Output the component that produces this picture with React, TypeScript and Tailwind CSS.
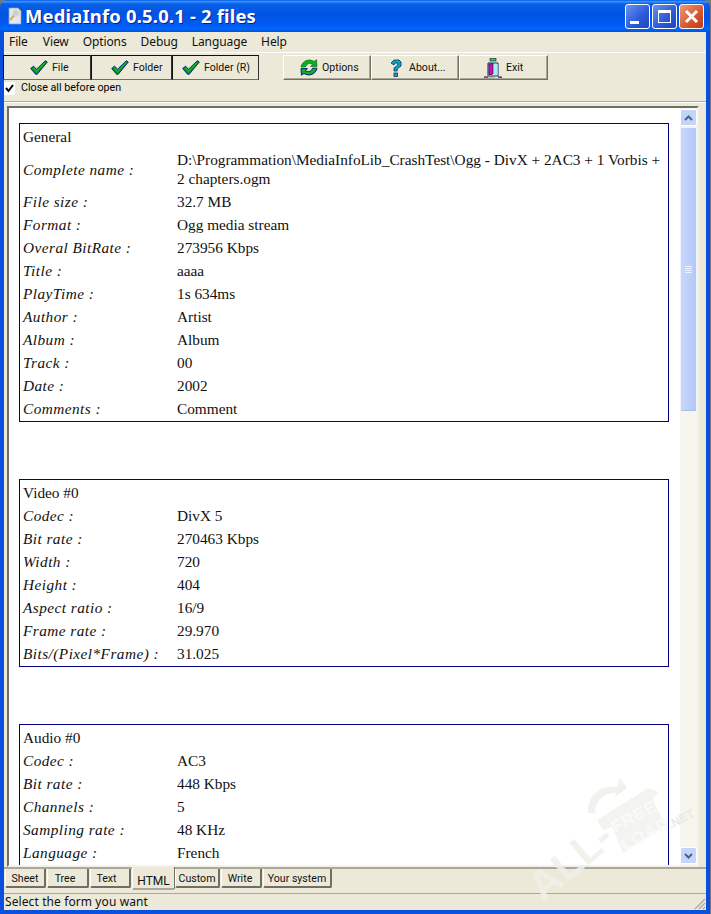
import React from "react";

const ui = "font-['Noto_Sans','DejaVu_Sans',sans-serif]";
const tool = "font-['Roboto','Noto_Sans',sans-serif]";

function Check() {
  return (
    <svg width="18" height="15" viewBox="0 0 18 15" className="shrink-0">
      <path d="M0.7 8.5 L3.5 6.2 L6.6 9.2 L15.3 0.7 L17.3 2 L7.2 14.3 L5.6 14.3 Z" fill="#07901a" stroke="#0b2a8a" strokeWidth="1" />
      <path d="M3.2 8 L6.6 11.2 L15 2.5" fill="none" stroke="#17b62a" strokeWidth="1.4" />
    </svg>
  );
}
function Refresh() {
  return (
    <svg width="18" height="17" viewBox="0 0 18 17" className="shrink-0">
      <path d="M1 8 C2 2 9 -1 14 2.5 L16.5 0.8 L17 7.4 L10.5 7.4 L12.5 5.2 C9.5 3.5 6.5 5 5.5 8 Z" fill="#0cb01c" stroke="#08701a" strokeWidth="0.7" />
      <path d="M17 9.2 C16 15 9 18 4 14.4 L1.5 16.2 L1 9.6 L7.5 9.6 L5.5 11.8 C8.5 13.5 11.5 12 12.5 9.2 Z" fill="#0cb01c" stroke="#0b1f8a" strokeWidth="1" />
    </svg>
  );
}
function Question() {
  return (
    <svg width="12" height="18" viewBox="0 0 12 18" className="shrink-0">
      <path d="M1 4 L4 1 L9 1 L11 3 L11 7 L7.2 10 L7.2 12 L4 12 L4 9 L7.8 6 L7.8 4 L5 4 L4 6 Z" fill="#10a6b6" stroke="#0a2a70" strokeWidth="0.8" />
      <rect x="4" y="14" width="3.4" height="3.4" fill="#10a6b6" stroke="#0a2a70" strokeWidth="0.8" />
    </svg>
  );
}
function Door() {
  return (
    <svg width="18" height="20" viewBox="0 0 18 20" className="shrink-0">
      <rect x="6" y="0.5" width="6" height="2.5" fill="#10d060" stroke="#123" strokeWidth="0.6" />
      <path d="M4 5 L14 5 L14 18 L4 18 Z" fill="#fff" stroke="#1a1a60" strokeWidth="1" />
      <path d="M5 6 L9 5.5 L9 16 L5 17 Z" fill="#d010b0" stroke="#20104a" strokeWidth="0.8" />
      <rect x="10" y="6" width="3.5" height="11" fill="#a8f0f0" />
      <path d="M0 19.2 L4 19.2 M14 19.2 L18 19.2" stroke="#1a1a80" strokeWidth="1.2" />
      <rect x="4.5" y="17" width="6" height="2.5" fill="#888" />
    </svg>
  );
}

function ToolBtn({ icon, label, w, pressed, pl, gap }: { icon: React.ReactNode; label: string; w: string; pressed?: boolean; pl: string; gap: string }) {
  return (
    <div
      className={`${tool} ${w} ${pl} ${gap} h-[25px] flex items-center text-[10.6px] text-[#111] border ${
        pressed
          ? "border-t-[#111] border-l-[#111] border-r-[#333] border-b-[#716f64]"
          : "border-t-[#fff] border-l-[#fff] border-r-[#716f64] border-b-[#716f64] shadow-[inset_-1px_-1px_0_#aca899]"
      }`}
    >
      {icon}
      <span>{label}</span>
    </div>
  );
}

type Row = [string, React.ReactNode];

function InfoTable({ title, rows, className = "" }: { title: string; rows: Row[]; className?: string }) {
  return (
    <div className={`border border-[#000080] px-[3px] pb-[1px] ${className}`}>
      <div className="h-[24px] pt-[3px] leading-[19px]">{title}</div>
      {rows.map(([k, v]) => (
        <div key={k} className="flex min-h-[23px] py-[2px] items-center leading-[19px]">
          <div className="w-[154px] shrink-0 italic tracking-[0.45px]">{k}</div>
          <div className="flex-1">{v}</div>
        </div>
      ))}
    </div>
  );
}

function Tab({ label, w, ml, active, pr = "" }: { label: string; w: string; ml: string; active?: boolean; pr?: string }) {
  return active ? (
    <div className={`${tool} ${w} ${ml} relative h-[23px] -mt-[2px] pt-[6px] text-center text-[12px] leading-[16px] border-l border-l-white border-r border-r-[#716f64] border-b-2 border-b-[#aca899] rounded-b-[2px] bg-[#ece9d8]`}>
      {label}
    </div>
  ) : (
    <div className={`${tool} ${w} ${ml} ${pr} h-[19px] pt-[3px] text-center text-[10.6px] leading-[14px] border-l border-l-white border-r-2 border-r-[#716f64] border-b-2 border-b-[#716f64] rounded-b-[2px]`}>
      {label}
    </div>
  );
}

export default function App() {
  return (
    <div className={`${ui} relative w-[711px] h-[914px] overflow-hidden flex flex-col pr-[1px] bg-[#777] text-black`}>
      {/* Title bar */}
      <div className="h-[32px] shrink-0 flex items-center pl-[7px] pr-[6px] rounded-t-[7px] bg-[linear-gradient(180deg,#0058e6_0%,#3a93ff_5%,#0a5fe8_12%,#0054e3_45%,#0058ee_70%,#0066ff_90%,#0053d8_100%)]">
        <svg width="16" height="18" viewBox="0 0 16 18" className="shrink-0">
          <path d="M2 1 L11 1 L14 4 L14 17 L2 17 Z" fill="#dfe8f8" stroke="#8aa0d0" strokeWidth="0.7" />
          <circle cx="9" cy="6" r="3.2" fill="#bcd0f0" stroke="#f2d8a0" strokeWidth="1.3" />
          <path d="M7 8.5 L3 13" stroke="#d8a860" strokeWidth="2" />
        </svg>
        <div className="ml-[2px] text-white font-bold text-[18.4px] leading-[24px] tracking-[0.2px] [text-shadow:1px_1px_0_#0f1f8a]">MediaInfo 0.5.0.1 - 2 files</div>
        <div className="ml-auto flex gap-[2px]">
          <div className="w-[25px] h-[25px] rounded-[3px] border border-white bg-[linear-gradient(135deg,#6a93ee,#2a58d8_60%,#2046c0)] relative">
            <div className="absolute left-[4px] bottom-[4px] w-[9px] h-[3px] bg-white" />
          </div>
          <div className="w-[25px] h-[25px] rounded-[3px] border border-white bg-[linear-gradient(135deg,#6a93ee,#2a58d8_60%,#2046c0)] flex items-center justify-center">
            <div className="w-[13px] h-[13px] border border-white border-t-[3px]" />
          </div>
          <div className="w-[25px] h-[25px] rounded-[3px] border border-white bg-[linear-gradient(135deg,#ec9a7c,#d8552c_60%,#c03c14)] flex items-center justify-center">
            <svg width="15" height="15" viewBox="0 0 15 15"><path d="M2 2 L13 13 M13 2 L2 13" stroke="#fff" strokeWidth="3" /></svg>
          </div>
        </div>
      </div>

      {/* Body with blue side borders */}
      <div className="flex-1 min-h-0 flex border-x-[4px] border-x-[#0a50e0] border-b-[4px] border-b-[#0a50e0] bg-[#ece9d8]">
        <div className="flex-1 min-w-0 flex flex-col">
          {/* Menu */}
          <div className="h-[21px] shrink-0 flex items-center pl-[5px] gap-[14px] text-[12px] tracking-[-0.1px] text-[#111] border-b border-b-white">
            <span className="mr-[1px]">File</span>
            <span>View</span>
            <span>Options</span>
            <span>Debug</span>
            <span>Language</span>
            <span>Help</span>
          </div>
          {/* Toolbar */}
          <div className="h-[25px] mt-[2px] shrink-0 flex -ml-[1px]">
            <ToolBtn pressed w="w-[88px]" pl="pl-[26px]" gap="gap-[4px]" icon={<Check />} label="File" />
            <ToolBtn pressed w="w-[81px]" pl="pl-[19px]" gap="gap-[4px]" icon={<Check />} label="Folder" />
            <ToolBtn pressed w="w-[87px]" pl="pl-[9px]" gap="gap-[4px]" icon={<Check />} label="Folder (R)" />
            <div className="w-[24px]" />
            <ToolBtn w="w-[88px]" pl="pl-[16px]" gap="gap-[4px]" icon={<Refresh />} label="Options" />
            <ToolBtn w="w-[88px]" pl="pl-[18px]" gap="gap-[7px]" icon={<Question />} label="About..." />
            <ToolBtn w="w-[89px]" pl="pl-[24px]" gap="gap-[4px]" icon={<Door />} label="Exit" />
          </div>
          {/* Checkbox */}
          <div className="h-[14px] mt-[1px] shrink-0 flex items-center gap-[6px] text-[10.7px] relative">
            <div className="w-[11px] h-[13px] bg-white flex items-center justify-center">
              <svg width="9" height="9" viewBox="0 0 9 9"><path d="M1 4 L3.5 7 L8 1" fill="none" stroke="#000" strokeWidth="2" /></svg>
            </div>
            <span className={tool}>Close all before open</span>
          </div>
          <div className="h-[7px] shrink-0 border-b border-b-[#aca899]" />
          <div className="h-[4px] shrink-0 border-t border-t-white" />

          {/* Client */}
          <div className="h-[761px] shrink-0 flex mr-[7px] ml-[3px] border-t-2 border-l-2 border-t-[#716f64] border-l-[#716f64] border-b-2 border-b-[#f4f2e8] border-r-2 border-r-[#f4f2e8]">
            <div className="flex-1 min-w-0 overflow-hidden bg-white pt-[15px] pl-[10px] pr-[11px] font-['Liberation_Serif',serif] text-[15.3px] text-[#111]">
              <InfoTable
                title="General"
                rows={[
                  ["Complete name :", "D:\\Programmation\\MediaInfoLib_CrashTest\\Ogg - DivX + 2AC3 + 1 Vorbis + 2 chapters.ogm"],
                  ["File size :", "32.7 MB"],
                  ["Format :", "Ogg media stream"],
                  ["Overal BitRate :", "273956 Kbps"],
                  ["Title :", "aaaa"],
                  ["PlayTime :", "1s 634ms"],
                  ["Author :", "Artist"],
                  ["Album :", "Album"],
                  ["Track :", "00"],
                  ["Date :", "2002"],
                  ["Comments :", "Comment"],
                ]}
              />
              <InfoTable
                className="mt-[57px]"
                title="Video #0"
                rows={[
                  ["Codec :", "DivX 5"],
                  ["Bit rate :", "270463 Kbps"],
                  ["Width :", "720"],
                  ["Height :", "404"],
                  ["Aspect ratio :", "16/9"],
                  ["Frame rate :", "29.970"],
                  ["Bits/(Pixel*Frame) :", "31.025"],
                ]}
              />
              <InfoTable
                className="mt-[57px] pb-[60px]"
                title="Audio #0"
                rows={[
                  ["Codec :", "AC3"],
                  ["Bit rate :", "448 Kbps"],
                  ["Channels :", "5"],
                  ["Sampling rate :", "48 KHz"],
                  ["Language :", "French"],
                ]}
              />
            </div>
            {/* Scrollbar */}
            <div className="w-[17px] shrink-0 flex flex-col pt-[1px] pb-[1px] bg-[#f6f5ee]">
              <div className="h-[17px] shrink-0 rounded-[2px] border border-white bg-[#c4d5fb] flex items-center justify-center">
                <svg width="9" height="6" viewBox="0 0 9 6"><path d="M1 5 L4.5 1.5 L8 5" fill="none" stroke="#4d6185" strokeWidth="2" /></svg>
              </div>
              <div className="h-[284px] mt-[1px] shrink-0 rounded-[2px] border border-[#eef2fd] border-b-[#a8c0f0] bg-[linear-gradient(90deg,#c8d8fb,#bdd0f9_50%,#b4c8f5)] flex items-center justify-center">
                <div className="flex flex-col gap-[1px]">
                  <div className="w-[7px] h-[1px] bg-[#eef3ff]" />
                  <div className="w-[7px] h-[1px] bg-[#eef3ff]" />
                  <div className="w-[7px] h-[1px] bg-[#eef3ff]" />
                  <div className="w-[7px] h-[1px] bg-[#eef3ff]" />
                </div>
              </div>
              <div className="flex-1" />
              <div className="h-[17px] shrink-0 rounded-[2px] border border-white bg-[#c4d5fb] flex items-center justify-center">
                <svg width="9" height="6" viewBox="0 0 9 6"><path d="M1 1 L4.5 4.5 L8 1" fill="none" stroke="#4d6185" strokeWidth="2" /></svg>
              </div>
            </div>
          </div>

          {/* Tabs */}
          <div className="h-[26px] shrink-0 flex border-t-2 border-t-[#aca899] text-[#111]">
            <Tab ml="ml-[1px]" w="w-[41px]" label="Sheet" />
            <Tab ml="ml-[1px]" w="w-[42px]" pr="pr-[5px]" label="Tree" />
            <Tab ml="ml-[1px]" w="w-[41px]" pr="pr-[7px]" label="Text" />
            <Tab ml="ml-[1px]" active w="w-[43px]" label="HTML" />
            <Tab ml="ml-[0px]" w="w-[45px]" label="Custom" />
            <Tab ml="ml-[1px]" w="w-[41px]" pr="pr-[2px]" label="Write" />
            <Tab ml="ml-[1px]" w="w-[69px]" label="Your system" />
          </div>
          {/* Status */}
          <div className="flex-1 border-t border-t-[#aca899] text-[12px] tracking-[0.1px] leading-[16px] pl-[1px] text-[#111]">Select the form you want</div>
        </div>
      </div>

      {/* Watermark */}
      <svg className="absolute left-[525px] top-[775px] pointer-events-none" width="180" height="139" viewBox="-10 0 180 139">
        <path d="M53 38 C52 20 66 10 82 12 L85 3 L92 13 L80 22 L81 18 C70 17 60 26 60 38 Z" fill="#eeeeea" fillOpacity="0.8" />
        <path d="M62 45 L113 13 L123 17 L118 24 L130 50 L88 78 L77 52 L68 55 Z" fill="#eeeeea" fillOpacity="0.7" />
        <text transform="translate(80 58) rotate(-28)" fontFamily="Liberation Sans" fontWeight="700" fontSize="17" letterSpacing="1" fill="#fafaf8">FREE</text>
        <text transform="translate(90 76) rotate(-28)" fontFamily="Liberation Sans" fontWeight="700" fontSize="17" letterSpacing="1" fill="#fafaf8">LOAD</text>
        <text transform="translate(8 128) rotate(-40)" fontFamily="Liberation Sans" fontWeight="700" fontSize="42" fill="#f0f0ea" fillOpacity="0.85">ALL-</text>
        <text transform="translate(136 54) rotate(-28)" fontFamily="Liberation Sans" fontWeight="700" fontSize="12" fill="#e8e8e4" fillOpacity="0.9">.NET</text>
      </svg>
      {/* Resize grip */}
      <svg className="absolute right-[5px] bottom-[4px]" width="12" height="12" viewBox="0 0 12 12">
        <path d="M11 1 L1 11 M11 5 L5 11 M11 9 L9 11" stroke="#aca899" strokeWidth="1.2" />
      </svg>
    </div>
  );
}
